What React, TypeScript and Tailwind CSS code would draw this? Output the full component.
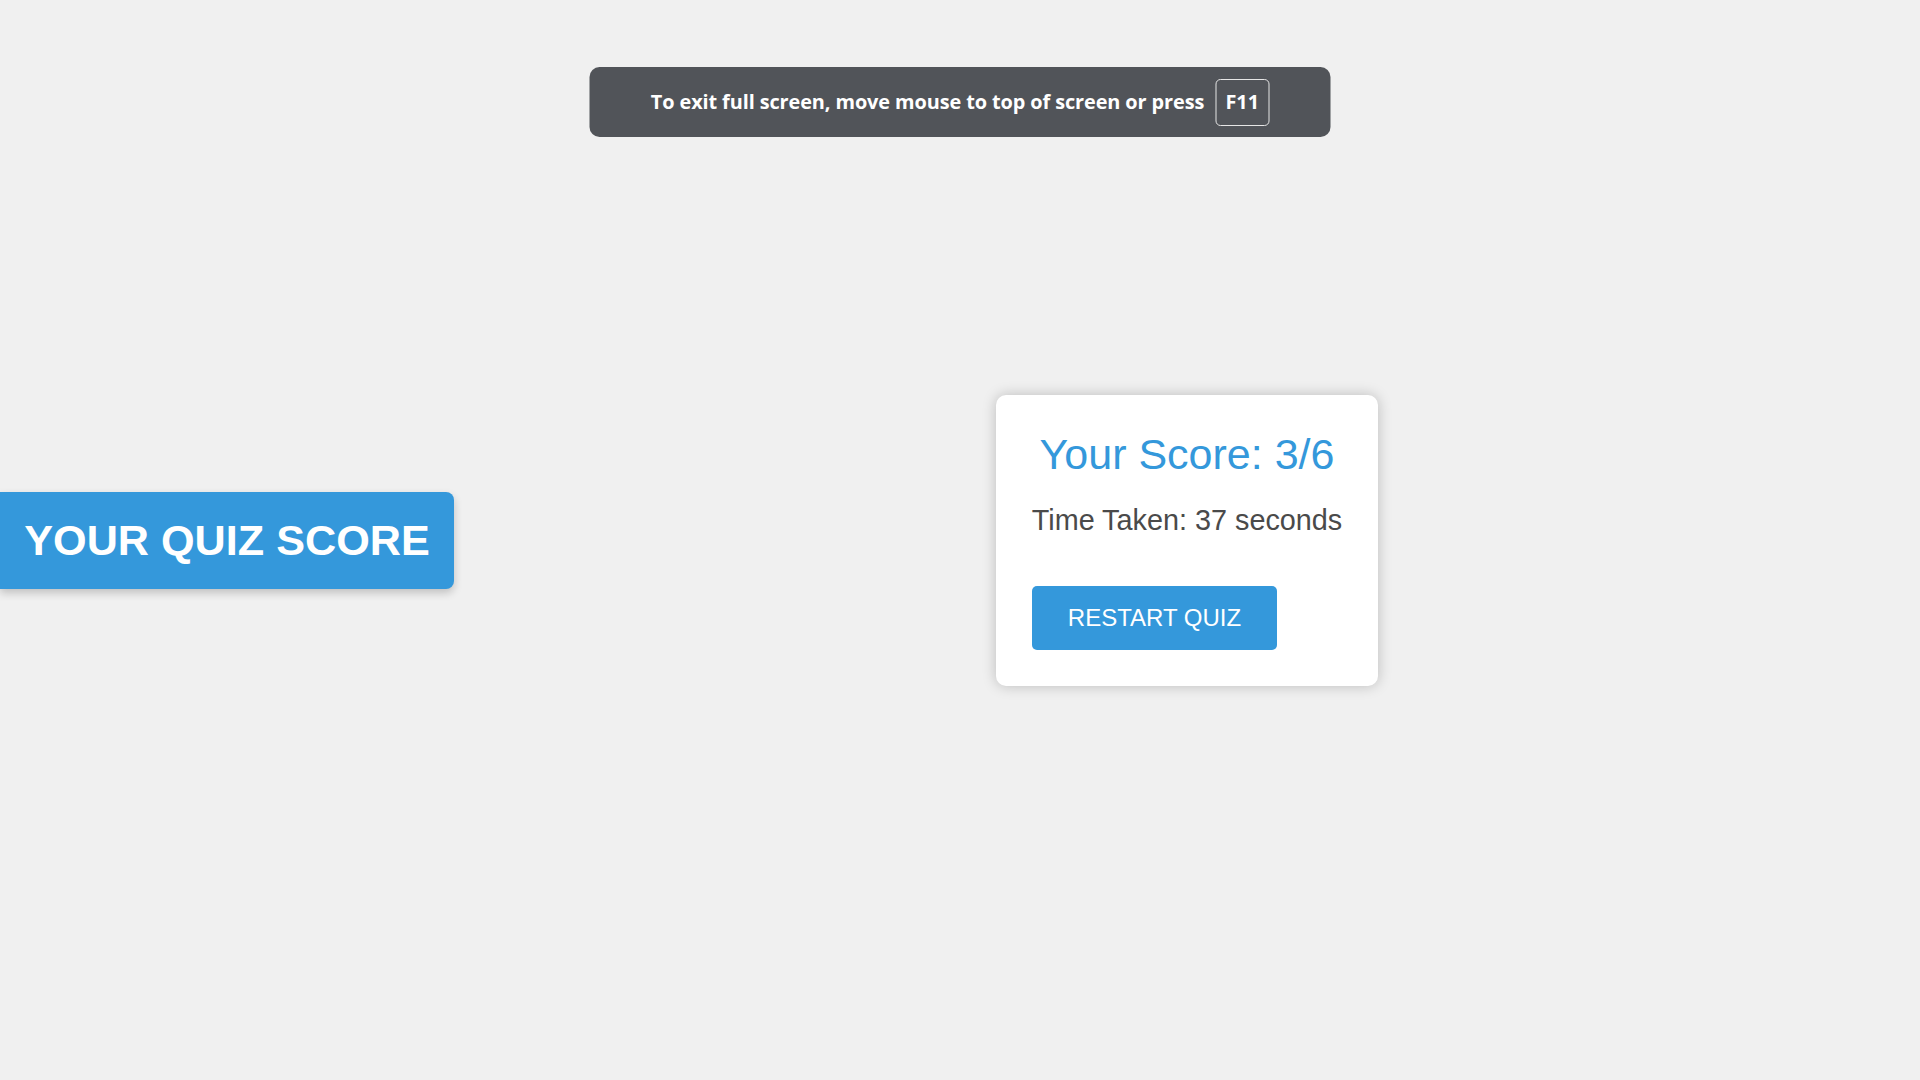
export default function App() {
    return (
        <div className="relative h-screen w-full bg-[#f0f0f0] overflow-hidden" style={{ fontFamily: '"Liberation Sans", Arial, sans-serif' }}>
            {/* Full screen notice */}
            <div className="absolute left-1/2 top-[67px] -translate-x-1/2 h-[70px] w-[741px] flex items-center justify-center gap-[11px] rounded-[10px] bg-[#515459] text-white font-['Open_Sans',sans-serif]">
                <span className="text-[19.9px] font-bold tracking-[-0.1px]">
                    To exit full screen, move mouse to top of screen or press
                </span>
                <span className="flex items-center justify-center w-[54px] h-[47px] rounded-[5px] border border-[#e6e6e6] text-[19.9px] font-bold">
                    F11
                </span>
            </div>

            {/* Main row */}
            <div className="flex h-full items-center">
                <h1 className="w-[454px] h-[97px] flex items-center justify-center rounded-r-[8px] bg-[#3498db] text-white text-[43.2px] font-bold shadow-[0_4px_8px_rgba(0,0,0,0.2)]">
                    YOUR QUIZ SCORE
                </h1>

                <div className="ml-[542px] w-[382px] rounded-[10px] bg-white p-[36px] pt-[35px] shadow-[0_0_14px_rgba(0,0,0,0.22)]">
                    <h2 className="text-center text-[43px] leading-[49px] text-[#3498db] whitespace-nowrap">
                        Your Score: 3/6
                    </h2>
                    <p className="-mx-[12px] mt-[25px] text-center text-[28.8px] leading-[33px] text-[#4a4a4a] whitespace-nowrap">
                        Time Taken: 37 seconds
                    </p>
                    <button className="mt-[49px] h-[64px] w-[245px] rounded-[5px] bg-[#3498db] text-white text-[24px]">
                        RESTART QUIZ
                    </button>
                </div>
            </div>
        </div>
    );
}
